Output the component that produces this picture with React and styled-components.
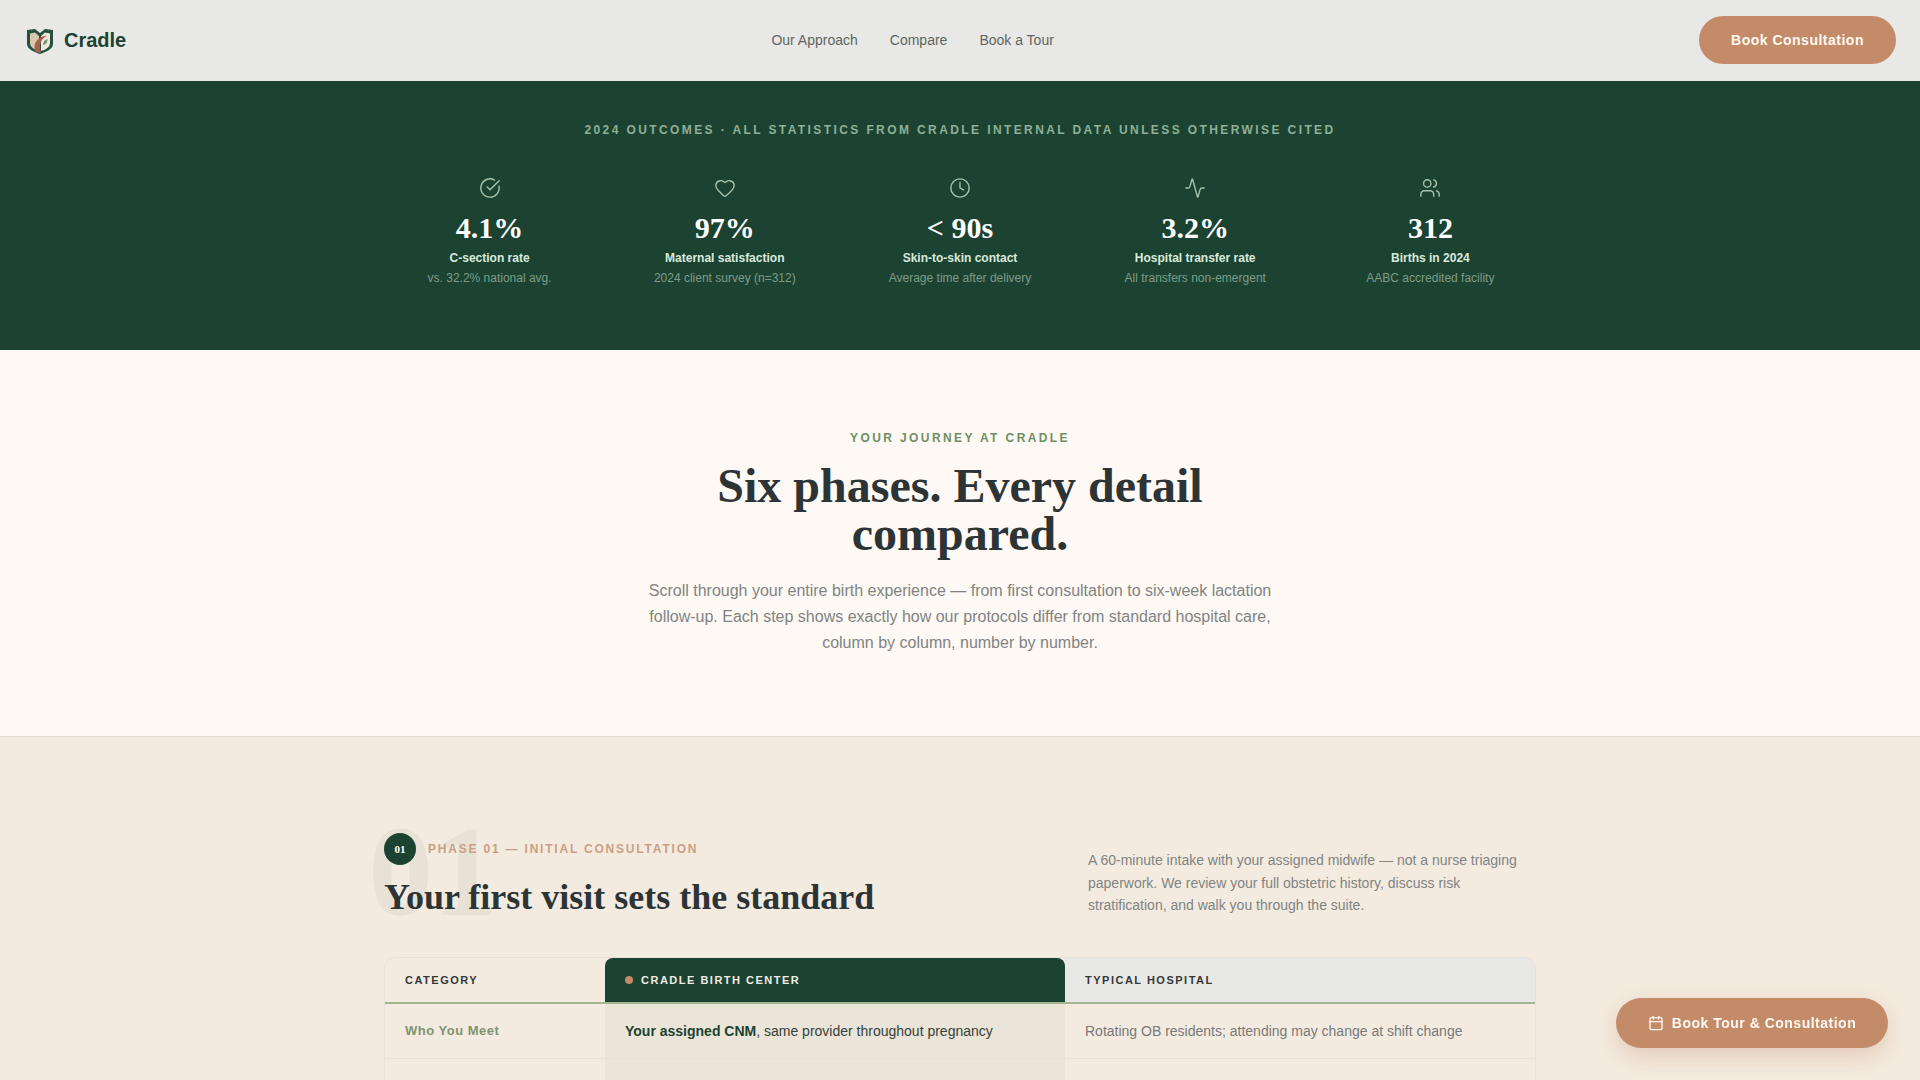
import * as React from "react";
import styled, { createGlobalStyle } from "styled-components";
import { CircleCheckBig, Heart, Clock, Activity, Users, Calendar } from "lucide-react";

const serif = `"Liberation Serif", Georgia, serif`;
const sans = `"Liberation Sans", Arial, sans-serif`;

const Global = createGlobalStyle`
  html, body {
    margin: 0;
    padding: 0;
    background: #fef9f5;
    font-family: ${sans};
  }
  * { box-sizing: border-box; }
`;

const Nav = styled.nav`
  position: sticky;
  top: 0;
  z-index: 10;
  height: 81px;
  padding: 0 24px 2px 26px;
  background: #e8e8e6;
  display: flex;
  justify-content: space-between;
  align-items: center;
`;

const Brand = styled.div`
  display: flex;
  align-items: center;
  gap: 10px;
  margin-top: 2px;
  font-size: 20px;
  font-weight: 700;
  color: #1c4332;
`;

const NavLinks = styled.div`
  display: flex;
  gap: 32px;
  a {
    font-size: 14px;
    color: #5f6661;
    text-decoration: none;
  }
`;

const NavButton = styled.button`
  width: 197px;
  height: 48px;
  border: none;
  border-radius: 24px;
  background: #c48b68;
  color: #fff9f2;
  font-family: ${sans};
  font-size: 14px;
  font-weight: 700;
  letter-spacing: 0.5px;
`;

const Outcomes = styled.section`
  height: 269px;
  padding-top: 42px;
  background: #1c4332;
  text-align: center;
`;

const Tagline = styled.p`
  margin: 0 0 40px;
  font-size: 12px;
  line-height: 14px;
  font-weight: 700;
  letter-spacing: 2.4px;
  color: #8fb096;
`;

const Stats = styled.div`
  width: 1176px;
  margin: 0 auto;
  display: grid;
  grid-template-columns: repeat(5, 1fr);
`;

const Stat = styled.div`
  display: flex;
  flex-direction: column;
  align-items: center;
  svg {
    color: #a7c4ab;
    margin-bottom: 11px;
  }
`;

const StatValue = styled.div`
  font-family: ${serif};
  font-size: 30px;
  line-height: 36px;
  font-weight: 700;
  color: #fff;
`;

const StatLabel = styled.div`
  margin-top: 3px;
  font-size: 12px;
  line-height: 18px;
  font-weight: 700;
  color: #d9eadb;
`;

const StatNote = styled.div`
  margin-top: 2px;
  font-size: 12px;
  line-height: 18px;
  color: #7d9c87;
`;

const Intro = styled.section`
  height: 386px;
  padding-top: 81px;
  background: #fef9f5;
  text-align: center;
`;

const Eyebrow = styled.div`
  font-size: 12px;
  line-height: 14px;
  font-weight: 700;
  letter-spacing: 2.4px;
  color: #6f8f63;
`;

const Title = styled.h1`
  width: 560px;
  margin: 17px auto 0;
  font-family: ${serif};
  font-size: 48px;
  line-height: 48px;
  font-weight: 700;
  color: #2d3436;
`;

const Lead = styled.p`
  width: 640px;
  margin: 20px auto 0;
  font-size: 16px;
  line-height: 26px;
  color: #808483;
`;

const Phase = styled.section`
  position: relative;
  padding: 96px 0 64px;
  background: #f4ebe0;
  border-top: 1px solid #e2ddd4;
`;

const PhaseInner = styled.div`
  width: 1152px;
  margin: 0 auto;
`;

const PhaseHead = styled.div`
  position: relative;
  display: grid;
  grid-template-columns: 1fr 448px;
  align-items: end;
  margin-bottom: 40px;
`;

const GhostNumber = styled.span`
  position: absolute;
  left: -16px;
  top: -27px;
  font-family: ${serif};
  font-size: 130px;
  line-height: 130px;
  font-weight: 700;
  color: #1c4332;
  opacity: 0.05;
`;

const PhaseTitleBlock = styled.div`
  position: relative;
`;

const PhaseTag = styled.div`
  display: flex;
  align-items: center;
  gap: 12px;
  font-size: 12px;
  font-weight: 700;
  letter-spacing: 1.8px;
  color: #c9a084;
`;

const PhaseBadge = styled.span`
  width: 32px;
  height: 32px;
  border-radius: 50%;
  background: #1c4332;
  color: #fff;
  display: flex;
  align-items: center;
  justify-content: center;
  font-family: ${serif};
  font-size: 11px;
  font-weight: 700;
  letter-spacing: 0;
`;

const PhaseTitle = styled.h2`
  margin: 12px 0 0;
  font-family: ${serif};
  font-size: 36px;
  line-height: 40px;
  font-weight: 700;
  color: #2d3436;
`;

const PhaseBlurb = styled.p`
  margin: 0;
  font-size: 14px;
  line-height: 22.75px;
  color: #808483;
`;

const Table = styled.div`
  border: 1px solid #e6e2d9;
  border-bottom: none;
  border-radius: 12px 12px 0 0;
`;

const Row = styled.div`
  display: grid;
  grid-template-columns: 220px 460px 1fr;
  border-bottom: 1px solid #e8e1d6;
`;

const HeadRow = styled(Row)`
  height: 46px;
  border-bottom: 2px solid #a4b594;
`;

const HeadCell = styled.div`
  display: flex;
  align-items: center;
  gap: 8px;
  padding: 0 20px;
  font-size: 11px;
  font-weight: 700;
  letter-spacing: 1.5px;
  color: ${(p) => (p.$tone === "cradle" ? "#f1ece2" : "#33383a")};
  background: ${(p) =>
    p.$tone === "cradle" ? "#1c4332" : p.$tone === "hospital" ? "#e8e8e6" : "transparent"};
  border-radius: ${(p) =>
    p.$tone === "cradle" ? "8px 8px 0 0" : p.$tone === "hospital" ? "0 12px 0 0" : "12px 0 0 0"};
`;

const Dot = styled.span`
  width: 8px;
  height: 8px;
  border-radius: 50%;
  background: #c48b68;
`;

const Cell = styled.div`
  min-height: 54px;
  padding: 17px 20px 0;
  font-size: 14px;
  line-height: 20px;
  color: ${(p) => (p.$tone === "cradle" ? "#33423a" : "#77797a")};
  background: ${(p) => (p.$tone === "cradle" ? "#ebe5d9" : "transparent")};
  b {
    color: #1c4332;
  }
`;

const CategoryCell = styled(Cell)`
  font-size: 13px;
  font-weight: 700;
  letter-spacing: 0.5px;
  color: #7f9470;
`;

const Fab = styled.button`
  position: fixed;
  right: 32px;
  bottom: 32px;
  z-index: 20;
  width: 272px;
  height: 50px;
  padding-bottom: 2px;
  border: none;
  border-radius: 25px;
  background: #c48b68;
  color: #fff9f2;
  font-family: ${sans};
  font-size: 14px;
  font-weight: 700;
  letter-spacing: 0.5px;
  display: flex;
  align-items: center;
  justify-content: center;
  gap: 8px;
  box-shadow: 0 8px 24px rgba(196, 139, 104, 0.35);
`;

const stats = [
  { Icon: CircleCheckBig, value: "4.1%", label: "C-section rate", note: "vs. 32.2% national avg." },
  { Icon: Heart, value: "97%", label: "Maternal satisfaction", note: "2024 client survey (n=312)" },
  { Icon: Clock, value: "< 90s", label: "Skin-to-skin contact", note: "Average time after delivery" },
  { Icon: Activity, value: "3.2%", label: "Hospital transfer rate", note: "All transfers non-emergent" },
  { Icon: Users, value: "312", label: "Births in 2024", note: "AABC accredited facility" },
];

const Logo = () => (
  <svg width="28" height="28" viewBox="0 0 28 28" fill="none">
    <path d="M1 3 L9 2 L14 6 L19 2 L27 3 V17 C27 22 20 25 14 27 C8 25 1 22 1 17 Z" fill="#25503d" />
    <path d="M4 6.5 L9 5.5 L13 9 V24 C9 23 4 20.5 4 16 Z" fill="#d8c8ac" />
    <path d="M15 9 L19 5.5 L24 6.5 V16 C24 20.5 19 23 15 24 Z" fill="#eee8da" />
    <path d="M9.5 25 C6 15 13 9.5 21 8.5 C15 12 12.5 17 15 26 Z" fill="#a9604a" />
    <path d="M17 18 C17 14.5 19 13 21.5 12 C21.5 15 20.5 17.5 17 18 Z" fill="#6f9679" />
  </svg>
);

const App = () => {
  return (
    <>
      <Global />
      <Nav>
        <Brand>
          <Logo />
          Cradle
        </Brand>
        <NavLinks>
          <a href="#approach">Our Approach</a>
          <a href="#compare">Compare</a>
          <a href="#tour">Book a Tour</a>
        </NavLinks>
        <NavButton>Book Consultation</NavButton>
      </Nav>

      <Outcomes>
        <Tagline>2024 OUTCOMES · ALL STATISTICS FROM CRADLE INTERNAL DATA UNLESS OTHERWISE CITED</Tagline>
        <Stats>
          {stats.map(({ Icon, value, label, note }) => (
            <Stat key={label}>
              <Icon size={22} strokeWidth={1.5} />
              <StatValue>{value}</StatValue>
              <StatLabel>{label}</StatLabel>
              <StatNote>{note}</StatNote>
            </Stat>
          ))}
        </Stats>
      </Outcomes>

      <Intro>
        <Eyebrow>YOUR JOURNEY AT CRADLE</Eyebrow>
        <Title>Six phases. Every detail compared.</Title>
        <Lead>
          Scroll through your entire birth experience — from first consultation to six-week lactation
          follow-up. Each step shows exactly how our protocols differ from standard hospital care,
          column by column, number by number.
        </Lead>
      </Intro>

      <Phase>
        <PhaseInner>
          <PhaseHead>
            <GhostNumber>01</GhostNumber>
            <PhaseTitleBlock>
              <PhaseTag>
                <PhaseBadge>01</PhaseBadge>
                PHASE 01 — INITIAL CONSULTATION
              </PhaseTag>
              <PhaseTitle>Your first visit sets the standard</PhaseTitle>
            </PhaseTitleBlock>
            <PhaseBlurb>
              A 60-minute intake with your assigned midwife — not a nurse triaging paperwork. We review
              your full obstetric history, discuss risk stratification, and walk you through the suite.
            </PhaseBlurb>
          </PhaseHead>

          <Table>
            <HeadRow>
              <HeadCell>CATEGORY</HeadCell>
              <HeadCell $tone="cradle">
                <Dot />
                CRADLE BIRTH CENTER
              </HeadCell>
              <HeadCell $tone="hospital">TYPICAL HOSPITAL</HeadCell>
            </HeadRow>
            <Row>
              <CategoryCell>Who You Meet</CategoryCell>
              <Cell $tone="cradle">
                <b>Your assigned CNM</b>, same provider throughout pregnancy
              </Cell>
              <Cell>Rotating OB residents; attending may change at shift change</Cell>
            </Row>
            <Row>
              <CategoryCell>Visit Length</CategoryCell>
              <Cell $tone="cradle">
                <b>60-minute intake</b> with full history review
              </Cell>
              <Cell>15-minute average appointment with limited review time</Cell>
            </Row>
          </Table>
        </PhaseInner>
      </Phase>

      <Fab>
        <Calendar size={16} strokeWidth={2} />
        Book Tour &amp; Consultation
      </Fab>
    </>
  );
};

export default App;
